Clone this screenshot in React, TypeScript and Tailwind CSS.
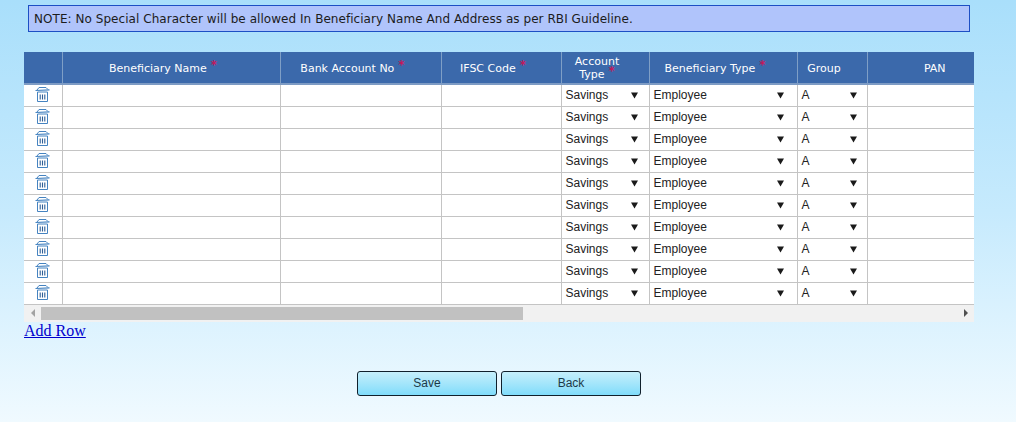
const rows = Array.from({ length: 10 }, (_, i) => i);

const Star = () => (
  <span className="relative -top-[3px] ml-[4px] text-[12px] leading-none font-bold text-[#c2185b]">*</span>
);

const Arrow = () => (
  <svg width="7" height="7" viewBox="0 0 7 7" className="shrink-0">
    <path d="M0 0.5 H7 L3.5 6.5 Z" fill="#1a1a1a" />
  </svg>
);

const TrashIcon = () => (
  <svg width="15" height="15" viewBox="0 0 15 15" fill="none" stroke="#4583c0" strokeWidth="1">
    <path d="M2 3 L4 0.5 H11 L13 2.5" />
    <path d="M0.5 3.5 L14.5 2.8" strokeWidth="1.2" />
    <path d="M2.5 5 H12.5 M2.5 5 V14.5 H12.5 V5" />
    <path d="M5.2 7.5 V12.5 M7.5 7.5 V12.5 M9.8 7.5 V12.5" stroke="#2f5f96" strokeWidth="1.1" />
  </svg>
);

const SelectCell = ({ value, width, arrowRight }: { value: string; width: string; arrowRight: string }) => (
  <td className={`${width} border-r border-[#c4c4c4] p-0`}>
    <div className={`flex items-center justify-between pl-[4px] ${arrowRight} font-['Liberation_Sans',sans-serif] text-[12px] text-[#222]`}>
      <span>{value}</span>
      <Arrow />
    </div>
  </td>
);

const HeadCell = ({ width, children }: { width: string; children?: React.ReactNode }) => (
  <th className={`${width} border-r border-[#7f9fc6] p-0 pt-[1px] pr-[16px] text-center align-middle text-[11px] leading-[13px] font-normal text-white last:border-r-0 last:pr-0 last:pl-[28px]`}>
    {children}
  </th>
);

export default function App() {
  return (
    <div className="h-[422px] w-[1016px] overflow-hidden bg-gradient-to-b from-[#a9dffb] via-[#c6eafd] to-[#f0faff] font-['DejaVu_Sans',sans-serif]">
      <div className="pt-[5px] pl-[28px]">
        <div className="flex h-[27px] w-[942px] items-center border border-[#1d4fc4] bg-[#b0c4fb] pl-[5px] text-[12px] tracking-[0.05px] text-[#1c1c1c]">
          NOTE: No Special Character will be allowed In Beneficiary Name And Address as per RBI Guideline.
        </div>
      </div>

      <div className="mt-[20px] ml-[24px] w-[950px]">
        <table className="w-[950px] table-fixed border-collapse bg-white">
          <thead>
            <tr className="h-[32px] border-b-2 border-[#7d9bc4] bg-[#3b69ab]">
              <HeadCell width="w-[38px]" />
              <HeadCell width="w-[218px]">Beneficiary Name<Star /></HeadCell>
              <HeadCell width="w-[161px]">Bank Account No<Star /></HeadCell>
              <HeadCell width="w-[120px]">IFSC Code<Star /></HeadCell>
              <HeadCell width="w-[88px]">Account<br />Type<Star /></HeadCell>
              <HeadCell width="w-[148px]">Beneficiary Type<Star /></HeadCell>
              <HeadCell width="w-[70px]">Group</HeadCell>
              <HeadCell width="w-[107px]">PAN</HeadCell>
            </tr>
          </thead>
          <tbody>
            {rows.map((r) => (
              <tr key={r} className="h-[22px] border-b border-[#c4c4c4]">
                <td className="border-r border-[#c4c4c4] p-0">
                  <div className="-mt-[1px] flex justify-center">
                    <TrashIcon />
                  </div>
                </td>
                <td className="border-r border-[#c4c4c4] p-0" />
                <td className="border-r border-[#c4c4c4] p-0" />
                <td className="border-r border-[#c4c4c4] p-0" />
                <SelectCell value="Savings" width="w-[88px]" arrowRight="pr-[11px]" />
                <SelectCell value="Employee" width="w-[148px]" arrowRight="pr-[13px]" />
                <SelectCell value="A" width="w-[70px]" arrowRight="pr-[10px]" />
                <td className="p-0" />
              </tr>
            ))}
          </tbody>
        </table>

        <div className="flex h-[17px] items-center bg-[#f1f1f1]">
          <div className="flex w-[17px] justify-center">
            <div className="h-0 w-0 border-y-[4px] border-r-[4px] border-y-transparent border-r-[#a3a3a3]" />
          </div>
          <div className="h-[13px] w-[482px] bg-[#c1c1c1]" />
          <div className="flex-1" />
          <div className="flex w-[17px] justify-center">
            <div className="h-0 w-0 border-y-[4px] border-l-[4px] border-y-transparent border-l-[#505050]" />
          </div>
        </div>

        <a href="#" className="block w-fit font-['Liberation_Serif',serif] text-[16px] leading-[18px] text-[#0000cc] underline">
          Add Row
        </a>
      </div>

      <div className="mt-[31px] ml-[357px] flex gap-[4px]">
        <button className="h-[25px] w-[140px] rounded-[3px] border border-[#10202c] bg-gradient-to-b from-[#c5effb] to-[#7fdcfb] font-['Liberation_Sans',sans-serif] text-[12px] text-[#1d3a48]">
          Save
        </button>
        <button className="h-[25px] w-[140px] rounded-[3px] border border-[#10202c] bg-gradient-to-b from-[#c5effb] to-[#7fdcfb] font-['Liberation_Sans',sans-serif] text-[12px] text-[#1d3a48]">
          Back
        </button>
      </div>
    </div>
  );
}
